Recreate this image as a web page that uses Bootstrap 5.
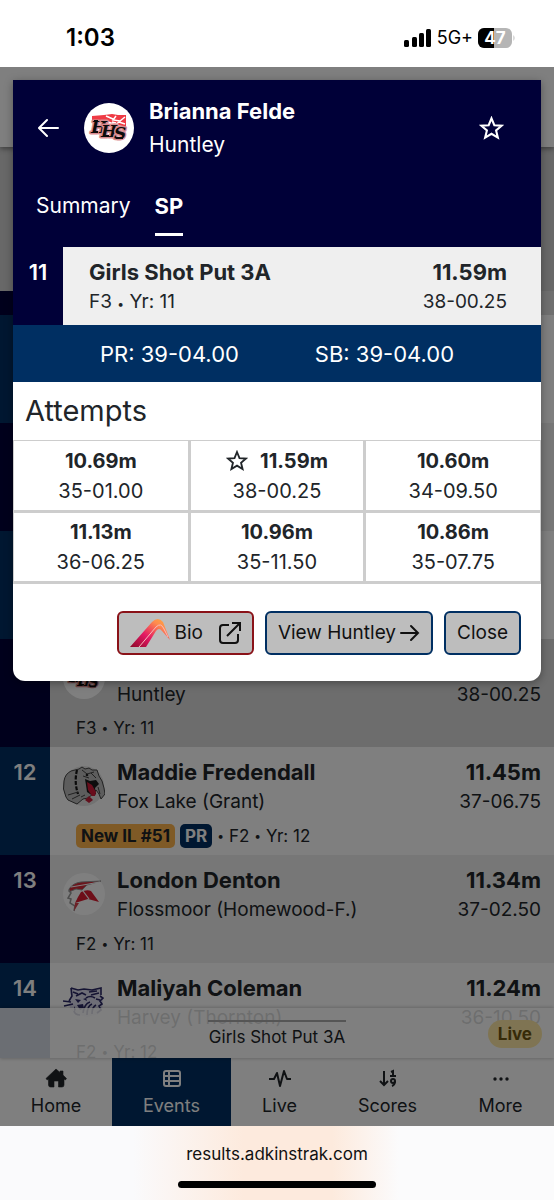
<!DOCTYPE html>
<html lang="en">
<head>
<meta charset="utf-8">
<meta name="viewport" content="width=device-width, initial-scale=1">
<title>Girls Shot Put 3A</title>
<link href="https://cdn.jsdelivr.net/npm/bootstrap@5.3.0/dist/css/bootstrap.min.css" rel="stylesheet">
<style>
  :root { --navy: #000038; --blue: #002f62; }
  body { font-family: Inter, "Liberation Sans", sans-serif; color: #212529; font-size: 19px; line-height: 30px; }
  a, a:hover { color: inherit; text-decoration: none; }
  svg { display: block; flex: none; }

  /* Phone status bar */
  .status-bar { height: 67px; padding: 8px 38px 0 66px; color: #000; }
  .clock { font-size: 24px; font-weight: 600; }
  .signal { gap: 5px; }
  .network { font-size: 18px; }

  /* Results page */
  .app { background: #d0d0d0; isolation: isolate; }
  .site-head { height: 80px; background: #fff; box-shadow: 0 2px 5px rgba(0,0,0,.4); }
  .event-head { height: 144px; }
  .list-head { height: 24px; background: #dedede; }
  .result { height: 108px; background: #fff; }
  .result.alt { background: #eee; }
  .result.current { background: #dadada; }
  .place { width: 50px; background: var(--blue); color: #fff; font-size: 22px; font-weight: 600; padding-top: 10px; text-align: center; }
  .alt > .place, .current > .place, .list-head > .place { background: var(--navy); }
  .team-logo { width: 42px; height: 42px; margin: 8px 12px 0 13px; }
  .athlete { font-size: 22px; font-weight: 700; }
  .result-body { padding-top: 10px; }
  .name-line { padding-right: 13px; min-height: 61px; }
  .meta { font-size: 17px; gap: 5px; margin-left: 26px; height: 32px; padding-top: 3px; }
  .dot { font-size: 12px; }
  .tag-il, .tag-pr { border-radius: 5px; padding: 0 5px; line-height: 24px; font-weight: 700; }
  .tag-pr { background: var(--blue); color: #fff; }
  .tag-il { background: #ffb54d; color: #212529; }

  .dock { left: 0; right: 0; bottom: 0; }
  .drawer { height: 50px; background: rgba(255,255,255,.84); box-shadow: 0 0 4px rgba(0,0,0,.3); font-size: 17px; }
  .handle { width: 138px; height: 2px; background: #aaa; margin: 12px auto 0; }
  .live-pill { right: 12px; top: 12px; background: #ffe9a6; color: #6d5410; font-weight: 700; line-height: 28px; border-radius: 14px; padding: 0 10px; }
  .tabs-bar { height: 68px; background: #fff; font-size: 18px; }
  .tabs-bar a { padding-top: 10px; }
  .tabs-bar a:nth-child(1) { flex: 112; }
  .tabs-bar a:nth-child(2) { flex: 119; }
  .tabs-bar a:nth-child(3) { flex: 97; }
  .tabs-bar a:nth-child(4) { flex: 119; }
  .tabs-bar a:nth-child(5) { flex: 107; }
  .tabs-bar .active { background: var(--blue); color: #fff; }
  .tabs-bar span { line-height: 36px; }

  .shade { inset: 0; background: rgba(0,0,0,.5); }

  /* Athlete dialog */
  .athlete-dialog { left: 13px; right: 13px; top: 13px; background: #fff; border-radius: 0 0 12px 12px; overflow: hidden; box-shadow: 0 2px 8px rgba(0,0,0,.35); }
  .dialog-head { background: var(--navy); color: #fff; font-size: 21px; }
  .head-line { padding: 0 37px 0 25px; height: 96px; }
  .head-logo { margin: 0 15px 0 25px; }
  .icon-btn { border: 0; background: none; color: inherit; padding: 0; }
  .head-name { line-height: 34px; }
  .head-name strong { font-size: 22px; font-weight: 700; }
  .head-tabs { padding: 12px 23px 0; gap: 24px; height: 71px; }
  .head-tabs a { height: 48px; line-height: 36px; }
  .head-tabs .active { font-size: 22px; font-weight: 700; border-bottom: 3px solid #fff; }
  .mark-row { background: #efefef; height: 78px; }
  .mark-info { padding: 10px 34px 0 26px; }
  .mark-row .place { background: var(--navy); }
  .bests { background: var(--blue); color: #fff; font-size: 22px; height: 57px; padding: 0 49px; }
  .attempts-title { font-size: 29px; font-weight: 400; line-height: 58px; margin: 0; padding-left: 12px; }
  .attempts { table-layout: fixed; border-collapse: collapse; width: 100%; font-size: 20px; }
  .attempts td { border: 3px solid #cdcdcd; height: 71px; text-align: center; padding: 0; }
  .attempts td:first-child { border-left-width: 1px; }
  .attempts td:last-child { border-right-width: 1px; }
  .attempts tr:first-child td { border-top-width: 1px; }
  .attempts strong { font-weight: 700; }
  .actions { padding: 27px 20px 26px; gap: 11px; }
  .dialog-btn { background: #bdbdbd; border: 2px solid var(--blue); border-radius: 6px; height: 44px; padding: 0 11px; color: #111; font-size: 19px; }
  .dialog-btn.bio { border-color: #8a1218; }

  /* Browser address bar */
  .browser-bar { height: 74px; padding-top: 13px; color: #111; font-size: 17px; background: linear-gradient(90deg, #fafafc 24%, #fdeadd 44% 60%, #fbfbfc 72%); }
  .home-line { width: 198px; height: 7px; border-radius: 4px; background: #000; margin: 12px auto 0; }
</style>
</head>
<body class="d-flex flex-column vh-100 overflow-hidden bg-white">

<svg class="d-none" aria-hidden="true">
  <symbol id="star" viewBox="0 0 24 24"><path d="M12 2.2l2.7 6.6 7.1.5-5.4 4.6 1.7 6.9L12 17.100l-6.100 3.700 1.700-6.900L2.200 9.300l7.100-.5z" fill="none" stroke="currentColor" stroke-width="2"/></symbol>
  <symbol id="hhs" viewBox="0 0 50 50">
    <circle cx="25" cy="25" r="25" fill="#fff"/>
    <path d="M8 13l12-1 8-1 6 1 8 0v12l-8-2-10-4-16-1z" fill="#ef3b45"/>
    <path d="M22 13l7 3M32 13l-3 4 7 1 5-4M31 22l4-3 6 2M28 19l4 1" fill="none" stroke="#fff" stroke-width="1.500"/>
    <g font-family="DejaVu Serif" font-weight="700" font-style="italic" font-size="17" fill="#0c0c0c" stroke="#d98b90" stroke-width="3" stroke-linejoin="round" paint-order="stroke">
      <text x="7" y="30">H</text><text x="17" y="34">H</text><text x="30" y="36">S</text>
    </g>
    <g font-family="DejaVu Serif" font-weight="700" font-style="italic" font-size="17" fill="#0c0c0c" stroke="#0c0c0c" stroke-width="1" aria-hidden="true">
      <path d="M10 18h4M10 29h4M20 33h5M32 35h7" stroke-width="2"/>
    </g>
  </symbol>
</svg>

<header class="status-bar d-flex align-items-center justify-content-between flex-shrink-0">
  <span class="clock">1:03</span>
  <div class="signal d-flex align-items-center">
    <svg width="28" height="18" viewBox="0 0 28 18"><rect y="11" width="5" height="7" rx="1.500"/><rect x="8" y="8" width="5" height="10" rx="1.500"/><rect x="15" y="4" width="5" height="14" rx="1.500"/><rect x="22" width="5" height="18" rx="1.500"/></svg>
    <span class="network">5G+</span>
    <svg width="38" height="20" viewBox="0 0 38 20" font-family="Inter" font-size="17" font-weight="700"><rect width="34" height="20" rx="6" fill="#b5b5b5"/><path d="M6 0h10v20H6a6 6 0 0 1-6-6V6a6 6 0 0 1 6-6z"/><path d="M35.500 7q2 3 0 6z" fill="#b5b5b5"/><text x="17" y="16" text-anchor="middle" fill="#fff">47</text></svg>
  </div>
</header>

<main class="app position-relative flex-grow-1 overflow-hidden">
  <div class="site-head position-relative"></div>
  <div class="event-head"></div>
  <div class="list-head d-flex"><div class="place"></div></div>
  <div class="result d-flex"><div class="place"></div></div>
  <div class="result alt d-flex"><div class="place"></div></div>
  <div class="result d-flex"><div class="place"></div></div>

  <div class="result current d-flex">
    <div class="place"></div>
    <div class="flex-grow-1 result-body">
      <div class="d-flex name-line">
        <svg class="team-logo"><use href="#hhs"/></svg>
        <div class="flex-grow-1 d-flex justify-content-between align-items-end"><span>Huntley</span><span>38-00.25</span></div>
      </div>
      <div class="meta d-flex align-items-center"><span>F3</span><span class="dot">•</span><span>Yr: 11</span></div>
    </div>
  </div>

  <div class="result d-flex">
    <div class="place">12</div>
    <div class="flex-grow-1 result-body">
      <div class="d-flex name-line">
        <svg class="team-logo" viewBox="0 0 42 42"><circle cx="21" cy="21" r="20" fill="#e4e4e4"/><path d="M1 16q1-7 7-10l8-2 3-2 3 2 4-1 3 2 5 0 2 6 3 5 2 7 1 6-4 5-2-5-3-4-3 4-5 4-5 1-6 5-9-4-2-3q-4-8-2-16z" fill="#bababa" stroke="#444" stroke-width="1"/><path d="M14 5q-3 12 1 24" fill="none" stroke="#151515" stroke-width="2.200" stroke-dasharray="4 1.500"/><path d="M22 14l5 2 6-1 3 4-4 4 1 6-3 2-6-4-1-7z" fill="#1a1a1a"/><path d="M24 17l5 3 4 7-1 4-3 0-4-6z" fill="#d21b38"/><path d="M19 5l5 4 7-2M20 11l6 2M28 8l5 5M5 30l10-3M35 22l2 7M9 34l8-4M18 32l4-2" stroke="#444" fill="none"/><circle cx="24" cy="10" r="1.300" fill="#222"/><path d="M26 31l4 4-4 3-4-3z" fill="#c4213a"/></svg>
        <div class="flex-grow-1">
          <div class="d-flex justify-content-between athlete"><span>Maddie Fredendall</span><span>11.45m</span></div>
          <div class="d-flex justify-content-between"><span>Fox Lake (Grant)</span><span>37-06.75</span></div>
        </div>
      </div>
      <div class="meta d-flex align-items-center"><span class="tag-il">New IL #51</span><span class="tag-pr">PR</span><span class="dot">•</span><span>F2</span><span class="dot">•</span><span>Yr: 12</span></div>
    </div>
  </div>

  <div class="result alt d-flex">
    <div class="place">13</div>
    <div class="flex-grow-1 result-body">
      <div class="d-flex name-line">
        <svg class="team-logo" viewBox="0 0 42 42"><circle cx="21" cy="21" r="21" fill="#fff"/><path d="M6 16q4-6 12-7l20-1-14 4-5 5-6-1-7 3z" fill="#d52a38" stroke="#999" stroke-width="1"/><path d="M8 14l12-2 17-3" stroke="#fff" fill="none"/><path d="M18 19q6-3 10-1l8 11-11-3-13 4 3-6z" fill="#dc1d31"/><path d="M20 18l6 8" stroke="#fff" stroke-width="1.200"/><path d="M6 17l2 3-3 5 3 1-1 4 5 3-1 5" fill="none" stroke="#999" stroke-width="1.500"/><path d="M12 30l-1 8 5-8z" fill="#d8404c"/></svg>
        <div class="flex-grow-1">
          <div class="d-flex justify-content-between athlete"><span>London Denton</span><span>11.34m</span></div>
          <div class="d-flex justify-content-between"><span>Flossmoor (Homewood-F.)</span><span>37-02.50</span></div>
        </div>
      </div>
      <div class="meta d-flex align-items-center"><span>F2</span><span class="dot">•</span><span>Yr: 11</span></div>
    </div>
  </div>

  <div class="result d-flex">
    <div class="place">14</div>
    <div class="flex-grow-1 result-body">
      <div class="d-flex name-line">
        <svg class="team-logo" viewBox="0 0 42 42"><path d="M8 7l7 2h15l8-2v7l2 3-1 12-3 4-12 3-12-3-5-6-1-6 3-4-2-4z" fill="#ddddef"/><g fill="none" stroke="#2b2866" stroke-width="1.600"><path d="M8 7l7 2 6-1 8 1 9-2v7M8 7l1 8-3 5M10 11l5 2M13 15l6-3 4 2M26 11l8-1M28 14l8-2M37 15l3 2-3 3 2 3-3 2 2 4-4 3"/><path d="M0 20l8 1M1 25l9-2M11 30q1 4 6 4M20 32q1-9 7-11M24 34q0-9 5-11M29 33q0-7 4-9" /><path d="M23 17q4-3 9 0M33 18l4 1" /></g><path d="M12 18l6 1-3 3zM14 24l6-1 1 4-4 2zM11 25l2 4-2 1zM20 18l3-1 1 3z" fill="#2b2866"/></svg>
        <div class="flex-grow-1">
          <div class="d-flex justify-content-between athlete"><span>Maliyah Coleman</span><span>11.24m</span></div>
          <div class="d-flex justify-content-between"><span>Harvey (Thornton)</span><span>36-10.50</span></div>
        </div>
      </div>
      <div class="meta d-flex align-items-center"><span>F2</span><span class="dot">•</span><span>Yr: 12</span></div>
    </div>
  </div>

  <div class="dock position-absolute">
    <div class="drawer position-relative d-flex flex-column text-center">
      <div class="handle"></div>
      <div>Girls Shot Put 3A</div>
      <span class="live-pill position-absolute">Live</span>
    </div>
    <nav class="tabs-bar d-flex text-center" aria-label="Sections">
      <a href="#home" class="d-flex flex-column align-items-center"><svg width="22" height="20" viewBox="0 0 22 20" fill="currentColor"><path d="M11 1l4 3.500V3h3v4l3.500 3.500-1.200 1.500-1.300-1v6q0 2-2 2h-3.500v-6h-4.500v6H5.500q-2 0-2-2v-6l-1.300 1L1 10.500z" stroke="currentColor" stroke-width=".6" stroke-linejoin="round"/></svg><span>Home</span></a>
      <a href="#events" class="active d-flex flex-column align-items-center"><svg width="20" height="20" viewBox="0 0 20 20" fill="none" stroke="currentColor" stroke-width="2"><rect x="2" y="3" width="16" height="15" rx="2"/><path d="M2 8h16M2 13h16M7 3v15"/></svg><span>Events</span></a>
      <a href="#live" class="d-flex flex-column align-items-center"><svg width="24" height="20" viewBox="0 0 24 20" fill="none" stroke="currentColor" stroke-width="2" stroke-linejoin="round"><path d="M1 11h5l3-6 3 13 4-15 3 8h4"/></svg><span>Live</span></a>
      <a href="#scores" class="d-flex flex-column align-items-center"><svg width="20" height="20" viewBox="0 0 20 20" fill="none" stroke="currentColor" stroke-width="2"><path d="M6 3v14M2 13l4 4 4-4"/><path d="M13 4l2-1v5M12 8h6"/><circle cx="15" cy="13" r="2"/><path d="M17 13q0 4-3 5"/></svg><span>Scores</span></a>
      <a href="#more" class="d-flex flex-column align-items-center"><svg width="18" height="20" viewBox="0 0 18 20" fill="currentColor"><circle cx="3" cy="11" r="1.700"/><circle cx="9" cy="11" r="1.700"/><circle cx="15" cy="11" r="1.700"/></svg><span>More</span></a>
    </nav>
  </div>

  <div class="shade position-absolute"></div>

  <section class="athlete-dialog position-absolute" role="dialog" aria-label="Brianna Felde">
    <div class="dialog-head">
      <div class="head-line d-flex align-items-center">
        <button class="icon-btn" type="button" aria-label="Back"><svg width="21" height="20" viewBox="0 0 21 20" fill="none" stroke="currentColor" stroke-width="2" stroke-linecap="round" stroke-linejoin="round"><path d="M20 10H2M9 2L1 10l8 8"/></svg></button>
        <svg class="head-logo" width="50" height="50" viewBox="0 0 50 50"><use href="#hhs"/></svg>
        <div class="head-name flex-grow-1 d-flex flex-column"><strong>Brianna Felde</strong><span>Huntley</span></div>
        <button class="icon-btn" type="button" aria-label="Favorite"><svg width="25" height="25"><use href="#star"/></svg></button>
      </div>
      <nav class="head-tabs d-flex"><a href="#summary">Summary</a><a href="#sp" class="active">SP</a></nav>
    </div>
    <div class="mark-row d-flex">
      <div class="place">11</div>
      <div class="mark-info flex-grow-1">
        <div class="athlete d-flex justify-content-between"><span>Girls Shot Put 3A</span><span>11.59m</span></div>
        <div class="d-flex justify-content-between"><span>F3 <span class="dot">•</span> Yr: 11</span><span>38-00.25</span></div>
      </div>
    </div>
    <div class="bests d-flex align-items-center justify-content-around"><span>PR: 39-04.00</span><span>SB: 39-04.00</span></div>
    <h2 class="attempts-title">Attempts</h2>
    <table class="attempts">
      <tr><td><strong>10.69m</strong><br>35-01.00</td><td><div class="d-flex justify-content-center align-items-center gap-2"><svg width="22" height="22"><use href="#star"/></svg><strong class="ms-1">11.59m</strong></div>38-00.25</td><td><strong>10.60m</strong><br>34-09.50</td></tr>
      <tr><td><strong>11.13m</strong><br>36-06.25</td><td><strong>10.96m</strong><br>35-11.50</td><td><strong>10.86m</strong><br>35-07.75</td></tr>
    </table>
    <div class="actions d-flex justify-content-end">
      <button class="dialog-btn bio d-flex align-items-center" type="button">
        <svg width="40" height="30" viewBox="0 0 40 30"><defs><linearGradient id="ribbon" x1="0" y1="1" x2="1" y2="0"><stop offset="0" stop-color="#8c0828"/><stop offset=".4" stop-color="#e31864"/><stop offset=".75" stop-color="#ff8b4e"/><stop offset="1" stop-color="#ffb13d"/></linearGradient></defs><path d="M0 29L22 4q6-6 11 0l7 18-8-9q-3-4-6 0L16 29z" fill="url(#ribbon)"/><path d="M9 29L26 9q5-5 8 2l4 8" fill="none" stroke="#f8b9bd" stroke-width="1"/></svg>
        <span class="ms-1 me-2">Bio</span>
        <svg class="ms-2" width="22" height="22" viewBox="0 0 22 22" fill="none" stroke="currentColor" stroke-width="2"><path d="M10 3H4q-3 0-3 3v12q0 3 3 3h12q3 0 3-3v-6M8 14L20 2M13 1h8v8"/></svg>
      </button>
      <button class="dialog-btn d-flex align-items-center" type="button">View Huntley <svg class="ms-1" width="20" height="20" viewBox="0 0 20 20" fill="none" stroke="currentColor" stroke-width="2" stroke-linecap="round"><path d="M1 10h17M11 3l7 7-7 7"/></svg></button>
      <button class="dialog-btn" type="button">Close</button>
    </div>
  </section>
</main>

<footer class="browser-bar flex-shrink-0 text-center">
  <div>results.adkinstrak.com</div>
  <div class="home-line"></div>
</footer>

<script src="https://cdn.jsdelivr.net/npm/bootstrap@5.3.0/dist/js/bootstrap.bundle.min.js"></script>
</body>
</html>
